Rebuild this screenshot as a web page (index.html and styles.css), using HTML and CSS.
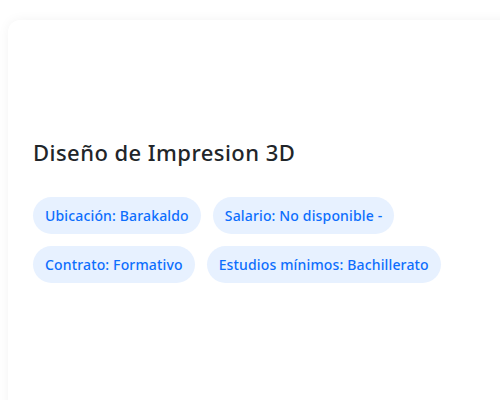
FILE: index.html
```html
<!DOCTYPE html>
<html lang="es">
<head>
<meta charset="utf-8">
<link rel="stylesheet" href="styles.css">
</head>
<body>
<div class="card">
  <h2 class="title">Diseño de Impresion 3D</h2>
  <div class="tags">
    <span class="tag">Ubicación: Barakaldo</span>
    <span class="tag">Salario: No disponible -</span>
    <span class="tag">Contrato: Formativo</span>
    <span class="tag">Estudios mínimos: Bachillerato</span>
  </div>
</div>
</body>
</html>
```
FILE: styles.css
```css
html, body { margin: 0; padding: 0; background: #ffffff; }
body {
  font-family: "Noto Sans", "Open Sans", sans-serif;
  padding: 20px 0 0 8px;
  overflow: hidden;
  height: 400px;
  box-sizing: border-box;
}
.card {
  background: #ffffff;
  border-radius: 12px;
  box-shadow: 0 0 12px rgba(0,0,0,0.05);
  width: 520px;
  height: 420px;
  padding: 117px 25px 0 25px;
  box-sizing: border-box;
}
.title {
  margin: 0 0 30px 0;
  font-size: 22px;
  font-weight: 500;
  letter-spacing: 0.45px;
  color: #212529;
  line-height: 30px;
}
.tags {
  display: flex;
  flex-wrap: wrap;
  column-gap: 12px;
  row-gap: 12px;
  width: 420px;
}
.tag {
  background: #e7f1ff;
  color: #0d6efd;
  font-size: 14px;
  font-weight: 500;
  letter-spacing: 0.15px;
  padding: 0 12px;
  height: 37px;
  line-height: 37px;
  border-radius: 19px;
  white-space: nowrap;
}
```
